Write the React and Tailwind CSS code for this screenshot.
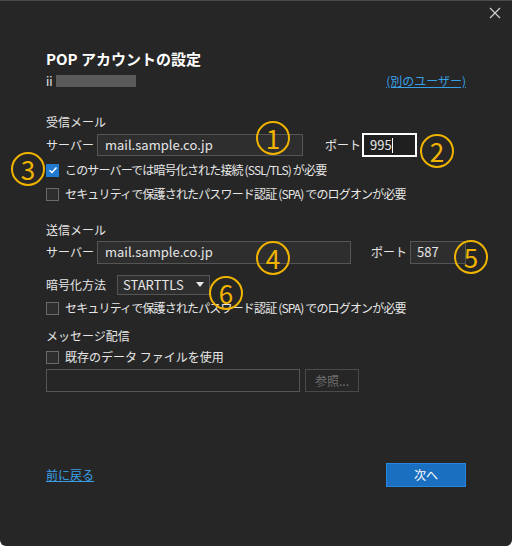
export default function App() {
  const f = { fontFamily: '"Noto Sans CJK JP", "Noto Sans", sans-serif' };
  const Circ = ({ n, x, y }) => (
    <div className="absolute flex items-center justify-center rounded-full border-2 border-[#f0b400] text-[#f0b400] text-[26px] leading-none" style={{ left: x - 17, top: y - 17, width: 34, height: 34 }}>{n}</div>
  );
  const Box = ({ checked }) => (
    <div className={"w-[13px] h-[13px] shrink-0 flex items-center justify-center " + (checked ? "bg-[#1f7ad0]" : "border border-[#6a6a6a] bg-[#2e2e2e]")}>
      {checked && <svg width="10" height="10" viewBox="0 0 10 10"><path d="M1.5 5.2 L4 7.5 L8.5 2.5" stroke="white" strokeWidth="1.5" fill="none" /></svg>}
    </div>
  );
  const cb = "flex items-center gap-[6px] h-[24px] whitespace-nowrap tracking-[-0.07em]";
  return (
    <div className="relative w-[512px] h-[546px] bg-[#262626] border-t border-[#4a4a4a] rounded-b-md text-[#e6e6e6] text-[12px] overflow-hidden" style={f}>
      <div className="absolute right-[11px] top-[6px] text-[#d0d0d0]">
        <svg width="12" height="12" viewBox="0 0 12 12"><path d="M1 1L11 11M11 1L1 11" stroke="currentColor" strokeWidth="1.2" /></svg>
      </div>
      <div className="pl-[46px] pr-[46px] pt-[47px] flex flex-col">
        <div className="text-[15px] font-bold text-white leading-[22px]">POP アカウントの設定</div>
        <div className="flex justify-between items-center h-[22px]">
          <div className="flex items-center gap-[3px]"><span>ii</span><div className="w-[80px] h-[12px] bg-[#5a5a5a]" /></div>
          <span className="text-[#3aa0e6] underline">(別のユーザー)</span>
        </div>
        <div className="mt-[20px] leading-[20px]">受信メール</div>
        <div className="flex items-center h-[24px] mt-[1px] whitespace-nowrap">
          <span className="w-[51px] shrink-0">サーバー</span>
          <div className="w-[206px] shrink-0 h-[22px] bg-[#2e2e2e] border border-[#555] flex items-center px-[7px] text-[13px]">mail.sample.co.jp</div>
          <span className="ml-[22px] w-[37px] shrink-0">ポート</span>
          <div className="w-[55px] shrink-0 h-[24px] bg-[#1f1f1f] border-2 border-white flex items-center px-[6px] text-[13px]">995<span className="w-px h-[15px] bg-white" /></div>
        </div>
        <div className={cb + " mt-[1px]"}><Box checked />このサーバーでは暗号化された接続 (SSL/TLS) が必要</div>
        <div className={cb}><Box />セキュリティで保護されたパスワード認証 (SPA) でのログオンが必要</div>
        <div className="mt-[14px] leading-[20px]">送信メール</div>
        <div className="flex items-center h-[24px] whitespace-nowrap">
          <span className="w-[51px] shrink-0">サーバー</span>
          <div className="w-[254px] shrink-0 h-[23px] bg-[#2e2e2e] border border-[#555] flex items-center px-[7px] text-[13px]">mail.sample.co.jp</div>
          <span className="ml-[20px] w-[39px] shrink-0">ポート</span>
          <div className="w-[56px] shrink-0 h-[23px] bg-[#2e2e2e] border border-[#555] flex items-center px-[6px] text-[13px]">587</div>
        </div>
        <div className="flex items-center h-[22px] mt-[10px] whitespace-nowrap">
          <span className="w-[71px] shrink-0">暗号化方法</span>
          <div className="w-[93px] h-[20px] bg-[#2e2e2e] border border-[#555] flex items-center justify-between px-[5px] text-[13px]">STARTTLS
            <svg width="8" height="6" viewBox="0 0 8 6"><path d="M0 0H8L4 5Z" fill="#e6e6e6" /></svg>
          </div>
        </div>
        <div className={cb}><Box />セキュリティで保護されたパスワード認証 (SPA) でのログオンが必要</div>
        <div className="mt-[6px] leading-[20px]">メッセージ配信</div>
        <div className="flex items-center gap-[6px] h-[22px]"><Box />既存のデータ ファイルを使用</div>
        <div className="flex items-center gap-[5px] mt-[1px]">
          <div className="w-[254px] h-[23px] border border-[#555] bg-[#262626]" />
          <div className="w-[54px] h-[23px] border border-[#4a4a4a] text-[#707070] flex items-center justify-center">参照...</div>
        </div>
        <div className="flex justify-between items-center mt-[71px]">
          <span className="text-[#3aa0e6] underline">前に戻る</span>
          <div className="w-[80px] h-[24px] bg-[#1a6fc0] border border-[#2a86dc] text-white flex items-center justify-center">次へ</div>
        </div>
      </div>
      <Circ n="1" x={273} y={137} />
      <Circ n="2" x={437} y={150} />
      <Circ n="3" x={28} y={168} />
      <Circ n="4" x={273} y={257} />
      <Circ n="5" x={471} y={256} />
      <Circ n="6" x={226} y={292} />
    </div>
  );
}
